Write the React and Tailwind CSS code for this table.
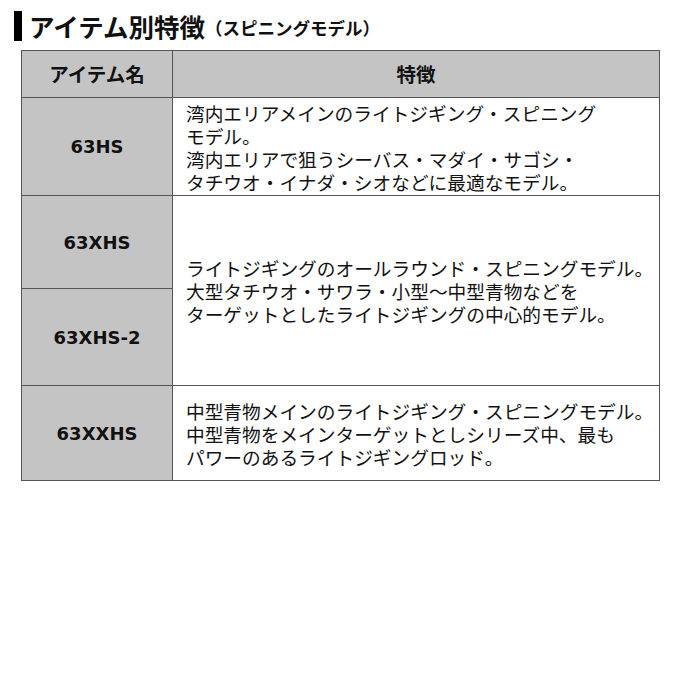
const rows = [
  {
    names: ['63HS'],
    heights: [98],
    lines: [
      '湾内エリアメインのライトジギング・スピニング',
      'モデル。',
      '湾内エリアで狙うシーバス・マダイ・サゴシ・',
      'タチウオ・イナダ・シオなどに最適なモデル。',
    ],
  },
  {
    names: ['63XHS', '63XHS-2'],
    heights: [93, 97],
    lines: [
      'ライトジギングのオールラウンド・スピニングモデル。',
      '大型タチウオ・サワラ・小型～中型青物などを',
      'ターゲットとしたライトジギングの中心的モデル。',
    ],
  },
  {
    names: ['63XXHS'],
    heights: [95],
    lines: [
      '中型青物メインのライトジギング・スピニングモデル。',
      '中型青物をメインターゲットとしシリーズ中、最も',
      'パワーのあるライトジギングロッド。',
    ],
  },
]

export default function App() {
  return (
    <div className="w-[680px] h-[680px] bg-white text-[#111] font-['Noto_Sans_CJK_JP',sans-serif]">
      {/* Title */}
      <div className="flex items-center pt-[10px] pl-[14px] h-[42px]">
        <span className="w-[8px] h-[30px] bg-black mr-[7px]" />
        <span className="text-[25.5px] font-bold leading-none">アイテム別特徴</span>
        <span className="text-[17.5px] font-bold leading-none mt-[4px]">（スピニングモデル）</span>
      </div>

      {/* Table */}
      <table className="ml-[21px] mt-[8px] w-[639px] border-collapse border border-[#555] table-fixed">
        <colgroup>
          <col className="w-[151px]" />
          <col />
        </colgroup>
        <thead>
          <tr className="h-[47px] bg-[#c4c4c4]">
            <th className="border border-[#555] text-[19.5px] font-bold">アイテム名</th>
            <th className="border border-[#555] text-[19.5px] font-bold">特徴</th>
          </tr>
        </thead>
        <tbody>
          {rows.map((r) =>
            r.names.map((name, i) => (
              <tr key={name} style={{ height: r.heights[i] }}>
                <td className="border border-[#555] bg-[#c4c4c4] text-center text-[18px] font-bold font-['DejaVu_Sans',sans-serif]">{name}</td>
                {i === 0 && (
                  <td rowSpan={r.names.length} className="border border-[#555] pl-[13px] align-middle">
                    <div className="text-[18.7px] leading-[23px] whitespace-nowrap">
                      {r.lines.map((l) => (
                        <div key={l}>{l}</div>
                      ))}
                    </div>
                  </td>
                )}
              </tr>
            ))
          )}
        </tbody>
      </table>
    </div>
  )
}
